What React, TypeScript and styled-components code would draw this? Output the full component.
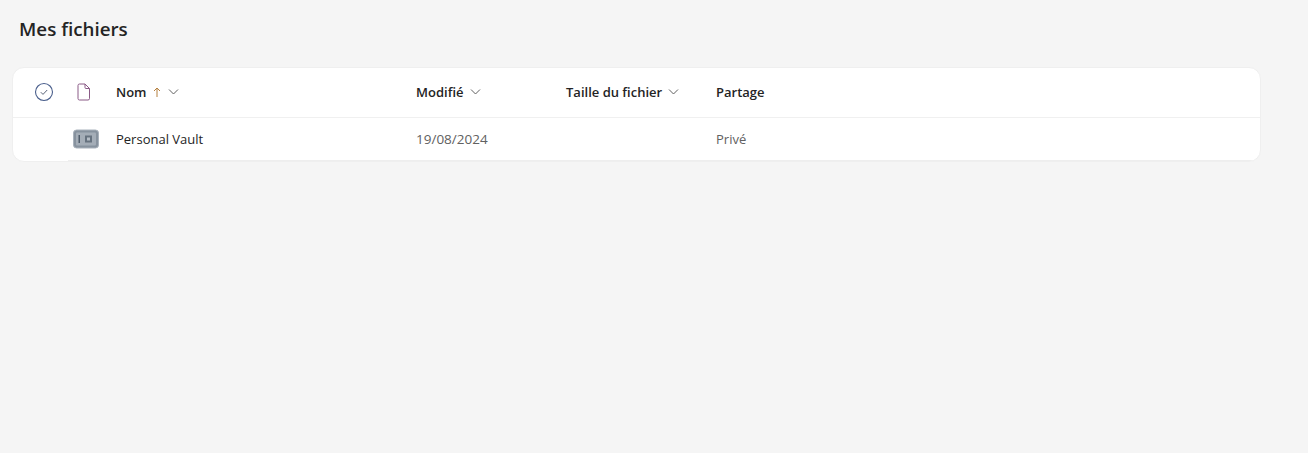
import React from 'react'
import styled, { createGlobalStyle } from 'styled-components'

const GlobalStyle = createGlobalStyle`
  html, body {
    margin: 0;
    padding: 0;
    height: 100%;
    background: #f5f5f5;
    font-family: "Open Sans", "Noto Sans", "Liberation Sans", sans-serif;
    color: #242424;
  }
`

const Page = styled.div`
  padding: 16px 47px 0 12px;
`

const Title = styled.h1`
  margin: 0 0 24px 7px;
  height: 27px;
  font-size: 18.8px;
  line-height: 27px;
  font-weight: 600;
  color: #242424;
`

const Card = styled.div`
  width: 1249px;
  box-sizing: border-box;
  background: #fff;
  border: 1px solid #efefef;
  border-radius: 12px;
  overflow: hidden;
`

const Row = styled.div<{ $height: number }>`
  display: grid;
  grid-template-columns: 60px 43px 300px 150px 150px 1fr;
  align-items: center;
  box-sizing: border-box;
  height: ${({ $height }) => $height}px;
  padding-bottom: 2px;
`

const HeaderRow = styled(Row)`
  border-bottom: 1px solid #f0f0f0;
`

const FileRow = styled(Row)`
  position: relative;

  &::after {
    content: '';
    position: absolute;
    left: 55px;
    right: 0;
    bottom: 0;
    height: 1px;
    background: #eeeeee;
  }
`

const CheckCell = styled.div`
  display: flex;
  align-items: center;
  padding-left: 21px;
`

const IconCell = styled.div<{ $inset?: number }>`
  display: flex;
  align-items: center;
  padding-left: ${({ $inset }) => $inset || 0}px;
`

const HeaderCell = styled.div`
  display: flex;
  align-items: center;
  font-size: 13px;
  font-weight: 600;
  color: #242424;
  white-space: nowrap;
`

const SortArrow = styled.svg`
  margin-left: 5px;
`

const Chevron = styled.svg<{ $gap: number }>`
  margin-left: ${({ $gap }) => $gap}px;
`

const VaultIcon = styled.svg`
  filter: blur(0.45px);
`

const Name = styled.div`
  font-size: 13px;
  color: #242424;
  white-space: nowrap;
`

const Muted = styled.div`
  font-size: 13px;
  color: #616161;
  white-space: nowrap;
`

const DateText = styled(Muted)`
  font-size: 13.5px;
`

const ChevronIcon = ({ gap }: { gap: number }) => (
  <Chevron $gap={gap} width="11" height="11" viewBox="0 0 11 11" fill="none">
    <path d="M1 3.5l4.5 4.5L10 3.5" stroke="#616161" strokeWidth="1" />
  </Chevron>
)

const App = () => (
  <>
    <GlobalStyle />
    <Page>
      <Title>Mes fichiers</Title>
      <Card>
        <HeaderRow $height={50}>
          <CheckCell>
            <svg width="20" height="20" viewBox="0 0 20 20" fill="none">
              <circle cx="10" cy="10" r="8.5" stroke="#4a5f8c" strokeWidth="1.1" />
              <path d="M6.8 10.2l2.2 2.2 4.2-4.4" stroke="#5a6478" strokeWidth="1" />
            </svg>
          </CheckCell>
          <IconCell $inset={3}>
            <svg width="16" height="18" viewBox="0 0 16 18" fill="none">
              <path d="M3.5 1h5.5l4.5 4.5V15.5a1.5 1.5 0 0 1-1.5 1.5H3.5A1.5 1.5 0 0 1 2 15.5V2.5A1.5 1.5 0 0 1 3.5 1z" stroke="#8a5a86" strokeWidth="1" />
              <path d="M9 1v3.5a1 1 0 0 0 1 1h3.5" stroke="#8a5a86" strokeWidth="1" />
            </svg>
          </IconCell>
          <HeaderCell>
            Nom
            <SortArrow width="10" height="12" viewBox="0 0 10 12" fill="none">
              <path d="M5 11V2M2 5l3-3 3 3" stroke="#b5803f" strokeWidth="1" />
            </SortArrow>
            <ChevronIcon gap={6} />
          </HeaderCell>
          <HeaderCell>
            Modifié
            <ChevronIcon gap={7} />
          </HeaderCell>
          <HeaderCell>
            Taille du fichier
            <ChevronIcon gap={6} />
          </HeaderCell>
          <HeaderCell>Partage</HeaderCell>
        </HeaderRow>
        <FileRow $height={43}>
          <div />
          <IconCell>
            <VaultIcon width="26" height="20" viewBox="0 0 26 20" fill="none">
              <rect x="0.5" y="1" width="25" height="18" rx="3" fill="#87929e" stroke="#a9b2bc" />
              <rect x="3" y="3.5" width="20" height="13" rx="1" fill="#a4adb7" />
              <rect x="5.5" y="6" width="1.5" height="8" fill="#4f5c6b" />
              <rect x="12" y="6.5" width="7" height="7" fill="#66727f" />
              <rect x="14" y="8.5" width="3" height="3" fill="#b5bdc6" />
            </VaultIcon>
          </IconCell>
          <Name>Personal Vault</Name>
          <DateText>19/08/2024</DateText>
          <div />
          <Muted>Privé</Muted>
        </FileRow>
      </Card>
    </Page>
  </>
)

export default App
